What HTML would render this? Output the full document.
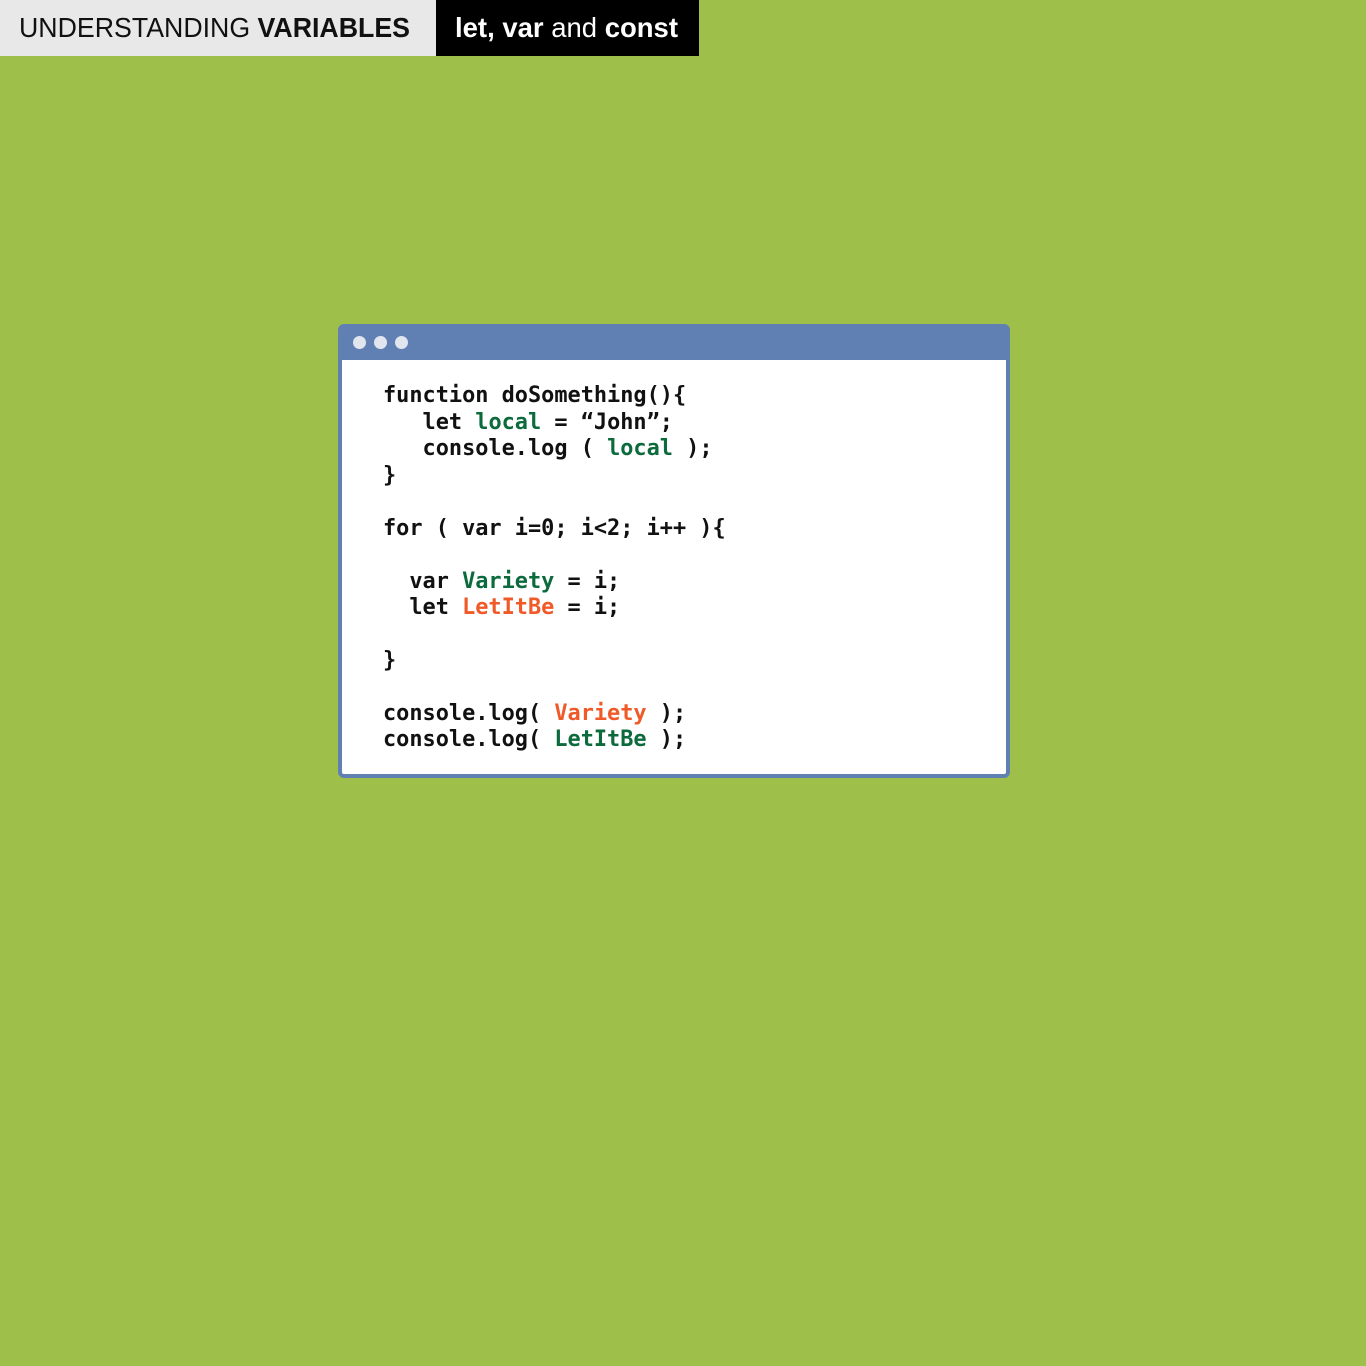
<!DOCTYPE html>
<html><head><meta charset="utf-8"><style>
html,body{margin:0;padding:0}
body{width:1366px;height:1366px;background:#9ebf4a;position:relative;overflow:hidden}
.win{position:absolute;left:338px;top:324px;width:664px;height:446px;border:4px solid #6080b4;border-radius:6px;background:#fff}
.bar{position:absolute;left:0;top:0;right:0;height:32px;background:#6080b4}
.dot{position:absolute;top:8px;width:13px;height:13px;border-radius:50%;background:#e1e5ee}
.l{position:absolute;left:383px;font:bold 21.9px "DejaVu Sans Mono","Liberation Mono",monospace;color:#111;white-space:pre;line-height:26px}
.g{color:#0c6b3c}.o{color:#f05a28}
</style></head><body>
<svg width="700" height="56" style="position:absolute;left:0;top:0">
<rect x="0" y="0" width="436" height="56" fill="#e8e8e8"/>
<rect x="436" y="0" width="263" height="56" fill="#000"/>
<text x="19" y="37" font-family="Liberation Sans, sans-serif" font-size="28" fill="#111" textLength="391" lengthAdjust="spacingAndGlyphs">UNDERSTANDING <tspan font-weight="bold">VARIABLES</tspan></text>
<text x="455" y="37" font-family="Liberation Sans, sans-serif" font-size="28" fill="#fff" textLength="223" lengthAdjust="spacingAndGlyphs"><tspan font-weight="bold">let, var</tspan> and <tspan font-weight="bold">const</tspan></text>
</svg>
<div class="win"><div class="bar"></div>
<div class="dot" style="left:11px"></div><div class="dot" style="left:32px"></div><div class="dot" style="left:53px"></div></div>
<div class="l" style="top:383px">function doSomething(){</div>
<div class="l" style="top:410px">   let <span class="g">local</span> = “John”;</div>
<div class="l" style="top:436px">   console.log ( <span class="g">local</span> );</div>
<div class="l" style="top:463px">}</div>
<div class="l" style="top:516px">for ( var i=0; i&lt;2; i++ ){</div>
<div class="l" style="top:569px">  var <span class="g">Variety</span> = i;</div>
<div class="l" style="top:595px">  let <span class="o">LetItBe</span> = i;</div>
<div class="l" style="top:648px">}</div>
<div class="l" style="top:701px">console.log( <span class="o">Variety</span> );</div>
<div class="l" style="top:727px">console.log( <span class="g">LetItBe</span> );</div>
</body></html>
